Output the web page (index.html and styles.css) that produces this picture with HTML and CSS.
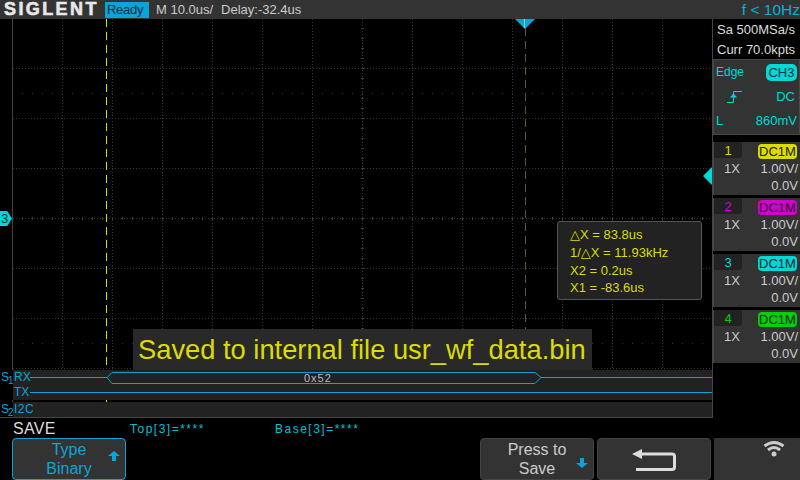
FILE: index.html
```html
<!DOCTYPE html>
<html lang="en">
<head>
  <meta charset="UTF-8" />
  <title>Siglent scope - Save</title>
  <link rel="stylesheet" href="styles.css">
</head>
<body>
  <div class="topbar">
    <span class="logo">SIGLENT</span>
    <span class="status">Ready</span>
    <span class="timebase">M 10.0us/</span>
    <span class="delay">Delay:-32.4us</span>
    <span class="freq">f &lt; 10Hz</span>
  </div>

  <div class="main">
    <div class="scope">
      <!-- viewBox uses screen coordinates -->
      <svg class="grid" viewBox="0 19 713 399">
        <path class="grid-line" d="M62.500 19V370M112.500 19V370M162.500 19V370M212.500 19V370M262.500 19V370M312.500 19V370M362.500 19V370M412.500 19V370M462.500 19V370M512.500 19V370M562.500 19V370M612.500 19V370M662.500 19V370"/>
        <path class="grid-line" d="M13 68.5H712M13 118.5H712M13 168.5H712M13 218.5H712M13 268.5H712M13 318.5H712M13 368.5H712"/>
        <path class="grid-dots" d="M12 93.5H712M12 343.5H712"/>
        <path class="grid-ticks" d="M12 218.5H712"/>
        <path class="grid-ticks grid-ticks-v" d="M362.5 19V370"/>
        <path class="axis" d="M12.5 19V418"/>
        <path class="cursor-dim" d="M525.5 28V402"/>
        <path class="cursor" d="M106.5 19V402"/>
        <polygon class="trig-pos" points="515,19 535,19 525,29"/>
        <path class="trig-pos-line" d="M524.5 19V28"/>
        <polygon class="trig-level" points="703,176 712,167 712,185"/>
      </svg>

      <div class="ch-marker">3</div>

      <div class="measure">
        <div>△X = 83.8us</div>
        <div>1/△X = 11.93kHz</div>
        <div>X2 = 0.2us</div>
        <div>X1 = -83.6us</div>
      </div>

      <div class="toast">Saved to internal file usr_wf_data.bin</div>

      <div class="bus bus-s1">
        <div class="bus-tag">S<sub>1</sub></div>
        <div class="bus-body">
          <svg class="bus-wave" viewBox="13 370 699 30">
            <path d="M30 377.5H107L112 372.5H535L541 377.5L535 383.5H112L107 377.5M541 377.5H712M30 392.5H712"/>
          </svg>
          <span class="bus-name bus-rx">RX</span>
          <span class="bus-name bus-tx">TX</span>
          <span class="bus-value">0x52</span>
        </div>
      </div>
      <div class="bus bus-s2">
        <div class="bus-tag">S<sub>2</sub></div>
        <div class="bus-body">
          <span class="bus-name">I2C</span>
        </div>
      </div>
    </div>

    <div class="side">
      <div class="acq">
        <div>Sa 500MSa/s</div>
        <div>Curr 70.0kpts</div>
      </div>
      <div class="trigger">
        <div class="trig-row">
          <span class="trig-type">Edge</span>
          <span class="trig-src">CH3</span>
        </div>
        <div class="trig-row">
          <svg class="edge-icon" viewBox="0 0 16 13">
            <path class="edge-line" d="M0 12.5H6.5V1.5H15"/>
            <polygon class="edge-arrow" points="6.5,3.5 10,7.5 3,7.5"/>
          </svg>
          <span class="trig-coupling">DC</span>
        </div>
        <div class="trig-row">
          <span>L</span>
          <span>860mV</span>
        </div>
      </div>

      <div class="channel ch1">
        <div class="ch-top"><span class="ch-num">1</span><span class="ch-chip">DC1M</span></div>
        <div class="ch-row"><span class="ch-probe">1X</span><span>1.00V/</span></div>
        <div class="ch-row ch-offset"><span>0.0V</span></div>
      </div>
      <div class="channel ch2">
        <div class="ch-top"><span class="ch-num">2</span><span class="ch-chip">DC1M</span></div>
        <div class="ch-row"><span class="ch-probe">1X</span><span>1.00V/</span></div>
        <div class="ch-row ch-offset"><span>0.0V</span></div>
      </div>
      <div class="channel ch3">
        <div class="ch-top"><span class="ch-num">3</span><span class="ch-chip">DC1M</span></div>
        <div class="ch-row"><span class="ch-probe">1X</span><span>1.00V/</span></div>
        <div class="ch-row ch-offset"><span>0.0V</span></div>
      </div>
      <div class="channel ch4">
        <div class="ch-top"><span class="ch-num">4</span><span class="ch-chip">DC1M</span></div>
        <div class="ch-row"><span class="ch-probe">1X</span><span>1.00V/</span></div>
        <div class="ch-row ch-offset"><span>0.0V</span></div>
      </div>
    </div>
  </div>

  <div class="footer">
    <div class="menu-title">
      <span class="menu-name">SAVE</span>
      <span class="cursor-top">Top[3]=****</span>
      <span class="cursor-base">Base[3]=****</span>
    </div>
    <div class="softkeys">
      <div class="softkey softkey-active">
        <div>Type</div>
        <div>Binary</div>
        <svg class="key-arrow" viewBox="0 0 12 10"><polygon points="6,0 12,5 8,5 8,10 4,10 4,5 0,5"/></svg>
      </div>
      <div class="softkey softkey-save">
        <div>Press to</div>
        <div>Save</div>
        <svg class="key-arrow" viewBox="0 0 12 10"><polygon points="6,10 12,5 8,5 8,0 4,0 4,5 0,5"/></svg>
      </div>
      <div class="softkey softkey-back">
        <svg class="back-icon" viewBox="0 0 44 24">
          <polygon points="0,6 10,1 10,11"/>
          <path d="M10 6H40Q42.500 6 42.500 8.500V19Q42.500 21.500 40 21.500H4"/>
        </svg>
      </div>
      <div class="wifi-panel">
        <svg class="wifi-icon" viewBox="0 0 22 17">
          <path d="M1.500 6Q11 -1 20.500 6M5 10Q11 5 17 10"/>
          <circle cx="11" cy="14" r="2.500"/>
        </svg>
      </div>
    </div>
  </div>
</body>
</html>
```

FILE: styles.css
```css
* { box-sizing: border-box; }
html, body { margin: 0; padding: 0; }
body { width: 800px; height: 480px; overflow: hidden; background: #000; font-family: "Liberation Sans", Arial, sans-serif; color: #ccc; }

/* top bar */
.topbar { display: flex; align-items: center; height: 19px; background: #333; font-size: 13px; line-height: 19px; white-space: nowrap; }
.logo { width: 105px; padding-left: 4px; font-size: 18px; font-weight: bold; letter-spacing: 2.400px; color: #e8e8e8; -webkit-text-stroke: 0.6px #e8e8e8; }
.status { width: 44px; height: 16px; padding-left: 2px; background: #0aa5d8; color: #052a3a; line-height: 16px; letter-spacing: -0.3px; }
.timebase { margin-left: 7px; }
.delay { margin-left: 8px; }
.freq { margin-left: auto; color: #00b4d8; font-size: 15.500px; }

/* scope area */
.main { display: flex; height: 399px; }
.scope { position: relative; display: flex; flex-direction: column; justify-content: flex-end; flex: none; width: 713px; border-right: 1px solid #444; border-bottom: 1px solid #444; }
.grid { position: absolute; left: 0; top: 0; width: 713px; height: 399px; }
.grid path { fill: none; stroke-width: 1; }
.grid-line { stroke: #333; stroke-dasharray: 1 2; }
.grid-dots { stroke: #333; stroke-dasharray: 1 9; }
.grid-ticks { stroke: #3a3a3a; stroke-dasharray: 1 9; stroke-width: 3 !important; }
.grid-ticks-v { stroke-dashoffset: -9; }
.axis { stroke: #444; }
.cursor { stroke: #e0e000; stroke-dasharray: 8 5; }
.cursor-dim { stroke: #5e5e10; stroke-dasharray: 8 5; }
.trig-pos { fill: #0aa5d8; }
.trig-pos-line { stroke: #7fd8f0; }
.trig-level { fill: #00d8d8; }

.ch-marker { position: absolute; left: 0; top: 192px; width: 12px; height: 15px; padding-left: 1px; background: #00d8d8; color: #033; font-size: 13px; line-height: 15px; clip-path: polygon(0 0, 60% 0, 100% 50%, 60% 100%, 0 100%); }

.measure { position: absolute; left: 557px; top: 202px; width: 145px; height: 79px; padding: 4px 0 0 12px; background: #222; border: 1px solid #555; border-radius: 3px; color: #dcdc00; font-size: 13px; line-height: 17.800px; font-family: "Liberation Sans", "DejaVu Sans", sans-serif; }

.toast { position: absolute; left: 133px; top: 310px; width: 459px; height: 41px; padding-left: 5px; background: #292929; color: #dcdc00; font-size: 27.300px; line-height: 41px; white-space: nowrap; }

/* decode bus rows */
.bus { position: relative; display: flex; font-size: 12px; color: #0aa5d8; }
.bus-s1 { height: 30px; margin-bottom: 2px; }
.bus-s2 { height: 15px; }
.bus-tag { width: 13px; background: #000; font-size: 12px; line-height: 14px; padding-left: 1px; white-space: nowrap; }
.bus-tag sub { font-size: 10px; line-height: 0; vertical-align: -3px; margin-left: -1px; }
.bus-body { position: relative; flex: 1; background: #222; padding-left: 1px; }
.bus-wave { position: absolute; left: 0; top: 0; width: 699px; height: 30px; }
.bus-wave path { fill: none; stroke: #0aa5d8; stroke-width: 1; }
.bus-name { display: block; line-height: 15px; }
.bus-rx, .bus-tx { position: relative; }
.bus-s2 .bus-name { letter-spacing: 0.5px; }
.bus-value { position: absolute; left: 291px; top: 1px; color: #bbb; font-size: 11px; line-height: 14px; letter-spacing: 1px; }

/* right column */
.side { display: flex; flex-direction: column; flex: 1; font-size: 13px; }
.acq { height: 40px; padding: 1px 0 0 4px; line-height: 20px; color: #ddd; white-space: nowrap; }
.trigger { display: flex; flex-direction: column; justify-content: space-between; height: 76px; padding: 3px 2px 5px 2px; background: #333; border: 1px solid #484848; color: #00d8d8; }
.trig-row { display: flex; align-items: center; justify-content: space-between; height: 18px; }
.trig-type { font-size: 12px; }
.trig-src { width: 31px; height: 17px; background: #00d8d8; color: #033; border-radius: 5px; text-align: center; line-height: 17px; }
.trig-coupling { margin-right: 2px; }
.edge-icon { width: 16px; height: 13px; margin-left: 11px; }
.edge-line { fill: none; stroke: #00d8d8; }
.edge-arrow { fill: #00d8d8; }

.channel { height: 53px; margin-top: 3px; background: #333; border-left: 1px solid #484848; }
.ch1 { margin-top: 7px; }
.ch-top { display: flex; align-items: flex-start; justify-content: space-between; height: 18px; }
.ch-num { width: 28px; height: 16px; background: #222; border-bottom-right-radius: 4px; text-align: center; line-height: 17px; }
.ch-chip { width: 39px; height: 15px; margin: 2px 3px 0 0; border-radius: 4px; color: #222; line-height: 15px; text-align: center; }
.ch-row { display: flex; justify-content: space-between; height: 17px; padding: 0 2px 0 10px; line-height: 17px; color: #ccc; }
.ch-offset { justify-content: flex-end; }
.ch1 .ch-num { color: #dcdc00; }
.ch1 .ch-chip { background: #dcdc00; }
.ch2 .ch-num { color: #d000d0; }
.ch2 .ch-chip { background: #d000d0; }
.ch3 .ch-num { color: #00d8d8; }
.ch3 .ch-chip { background: #00d8d8; }
.ch4 .ch-num { color: #00d000; }
.ch4 .ch-chip { background: #00d000; }

/* bottom menu */
.footer { height: 62px; }
.menu-title { position: relative; display: flex; align-items: center; height: 20px; padding-left: 13px; }
.menu-name { width: 117px; font-size: 16px; color: #ddd; letter-spacing: 0.3px; margin-top: 2px; }
.cursor-top, .cursor-base { color: #00c0d8; font-size: 12px; letter-spacing: 1.5px; margin-top: 2px; }
.cursor-top { width: 145px; }
.softkeys { display: flex; height: 42px; padding-left: 12px; }
.softkey { position: relative; width: 114px; padding-top: 2px; margin-right: 3px; background: #333; border: 1px solid #444; border-radius: 4px; text-align: center; font-size: 16px; line-height: 18.500px; color: #ccc; }
.softkey-active { border-color: #0aa5d8; color: #0aa5d8; }
.softkey-save { margin-left: auto; }
.key-arrow { position: absolute; right: 5px; top: 12px; width: 12px; height: 10px; fill: #0aa5d8; }
.softkey-save .key-arrow { top: 19px; }
.softkey-back { display: flex; align-items: center; justify-content: center; }
.back-icon { width: 44px; height: 24px; }
.back-icon polygon { fill: #ddd; }
.back-icon path { fill: none; stroke: #ddd; stroke-width: 3; }
.wifi-panel { width: 86px; background: #333; padding: 2px 0 0 49px; }
.wifi-icon { width: 22px; height: 17px; }
.wifi-icon path { fill: none; stroke: #ccc; stroke-width: 3; }
.wifi-icon circle { fill: #ccc; }
```
